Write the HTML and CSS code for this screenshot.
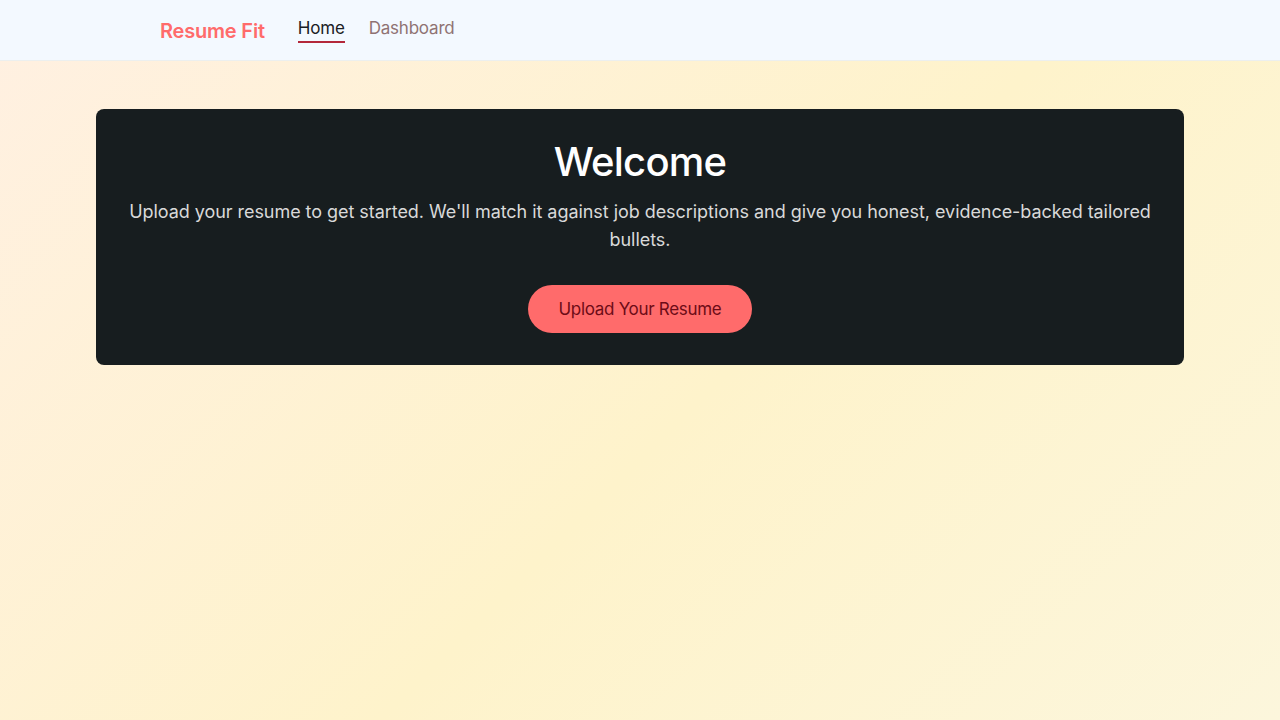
FILE: index.html
```html
<!DOCTYPE html>
<html lang="en">
<head>
<meta charset="utf-8">
<title>Resume Fit</title>
<link rel="stylesheet" href="styles.css">
</head>
<body>
  <header class="navbar">
    <div class="nav-inner">
      <a class="brand" href="#">Resume Fit</a>
      <nav class="nav-links">
        <a class="nav-link active" href="#">Home</a>
        <a class="nav-link" href="#">Dashboard</a>
      </nav>
    </div>
  </header>
  <main class="main">
    <section class="hero">
      <h1 class="hero-title">Welcome</h1>
      <p class="hero-text">Upload your resume to get started. We'll match it against job descriptions and give you honest, evidence-backed tailored bullets.</p>
      <button class="btn-upload" type="button">Upload Your Resume</button>
    </section>
  </main>
</body>
</html>
```

FILE: styles.css
```css
* { box-sizing: border-box; }

html, body { height: 100%; }

body {
  margin: 0;
  font-family: Inter, "Noto Sans", sans-serif;
  background: linear-gradient(135deg, #fff0e2 0%, #fef3cb 55%, #fcf6dc 100%);
  color: #1a2024;
}

.navbar {
  height: 61px;
  background: #f3f9ff;
  border-bottom: 1px solid #ecefee;
}

.nav-inner {
  width: 960px;
  margin: 0 auto;
  height: 60px;
  display: flex;
  align-items: center;
  gap: 33px;
}

.brand {
  color: #ff6b6b;
  font-size: 20px;
  font-weight: 600;
  text-decoration: none;
  letter-spacing: -0.2px;
  padding-top: 2px;
}

.nav-links {
  display: flex;
  gap: 24px;
  align-self: stretch;
  align-items: center;
}

.nav-link {
  font-size: 17px;
  text-decoration: none;
  color: #8f7373;
  letter-spacing: -0.2px;
  padding-bottom: 3px;
  border-bottom: 2px solid transparent;
}

.nav-link.active {
  color: #1a2024;
  border-bottom-color: #b3283a;
}

.main {
  max-width: 1120px;
  margin: 0 auto;
  padding: 48px 16px;
}

.hero {
  background: #171d1f;
  border-radius: 8px;
  padding: 29px 24px 32px;
  text-align: center;
}

.hero-title {
  margin: 0;
  font-size: 40px;
  line-height: 48px;
  font-weight: 500;
  color: #ffffff;
  letter-spacing: -0.8px;
}

.hero-text {
  margin: 12px 0 31px;
  font-size: 18px;
  line-height: 28px;
  color: #d9d9d9;
  font-weight: 400;
  letter-spacing: -0.05px;
}

.btn-upload {
  font-family: inherit;
  font-size: 17px;
  color: #6d0b17;
  background: #ff6b6b;
  border: none;
  border-radius: 24px;
  height: 48px;
  padding: 0 31px;
  letter-spacing: -0.3px;
  cursor: pointer;
}
```
